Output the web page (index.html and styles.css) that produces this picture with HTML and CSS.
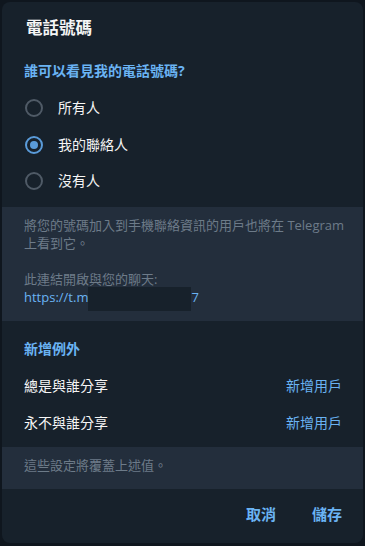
FILE: index.html
```html
<!DOCTYPE html>
<html lang="zh-Hant">
<head>
<meta charset="utf-8">
<link rel="stylesheet" href="styles.css">
</head>
<body>
<div class="dialog">
  <div class="header"><span class="title">電話號碼</span></div>
  <div class="section-title first">誰可以看見我的電話號碼?</div>
  <div class="options">
    <div class="option"><span class="radio"></span><span>所有人</span></div>
    <div class="option"><span class="radio checked"></span><span>我的聯絡人</span></div>
    <div class="option"><span class="radio"></span><span>沒有人</span></div>
  </div>
  <div class="note info">
    <p>將您的號碼加入到手機聯絡資訊的用戶也將在 Telegram 上看到它。</p>
    <p class="para2">此連結開啟與您的聊天:</p>
    <p class="link-line"><span class="link">https://t.m</span><span class="redact"></span><span class="link">7</span></p>
  </div>
  <div class="section-title second">新增例外</div>
  <div class="rows">
    <div class="row"><span>總是與誰分享</span><span class="link">新增用戶</span></div>
    <div class="row"><span>永不與誰分享</span><span class="link">新增用戶</span></div>
  </div>
  <div class="note footer-note"><p>這些設定將覆蓋上述值。</p></div>
  <div class="buttons">
    <span class="btn">取消</span>
    <span class="btn">儲存</span>
  </div>
</div>
</body>
</html>
```

FILE: styles.css
```css
html, body {
  margin: 0;
  padding: 0;
  background: #0f161e;
}
body {
  font-family: "Open Sans", "Noto Sans CJK TC", sans-serif;
  font-size: 13px;
  color: #f5f5f5;
  width: 365px;
  height: 546px;
  overflow: hidden;
}
.dialog {
  margin: 2px 2px 0 2px;
  width: 361px;
  height: 541px;
  background: #17212b;
  border-radius: 8px;
  display: flex;
  flex-direction: column;
  overflow: hidden;
}
.header {
  height: 46px;
  box-sizing: border-box;
  padding: 16px 24px 0 24px;
}
.title {
  display: block;
  font-size: 16.5px;
  font-weight: 700;
  line-height: 20px;
  color: #f5f5f5;
}
.section-title {
  padding: 0 22px;
  font-size: 14px;
  font-weight: 700;
  line-height: 20px;
  color: #6ab3f3;
}
.section-title.first {
  padding-top: 13px;
}
.section-title.second {
  padding-top: 18px;
}
.options {
  margin-top: 9px;
  display: flex;
  flex-direction: column;
}
.option {
  height: 36.5px;
  display: flex;
  align-items: center;
  padding-left: 23px;
  gap: 15px;
  font-size: 14px;
  line-height: 18px;
}
.radio {
  width: 18px;
  height: 18px;
  box-sizing: border-box;
  border: 2px solid #4f5a66;
  border-radius: 50%;
  display: flex;
  align-items: center;
  justify-content: center;
}
.radio.checked {
  border-color: #5a9bd9;
}
.radio.checked::after {
  content: "";
  width: 8px;
  height: 8px;
  border-radius: 50%;
  background: #5a9bd9;
}
.note {
  background: #232e3c;
  color: #6d7b89;
  padding: 0 14px 0 22px;
}
.note p {
  margin: 0;
  line-height: 18px;
}
.info {
  margin-top: 7.5px;
  padding-top: 9px;
  padding-bottom: 15px;
}
.para2 {
  margin-top: 18px !important;
}
.link-line {
  display: flex;
  align-items: center;
}
.link {
  color: #6ab3f3;
}
.redact {
  display: inline-block;
  width: 103px;
  height: 24px;
  background: #17212b;
  margin-top: -1px;
  margin-bottom: -5px;
}
.rows {
  margin-top: 8px;
  display: flex;
  flex-direction: column;
}
.row {
  height: 37.5px;
  display: flex;
  align-items: center;
  justify-content: space-between;
  padding: 0 21px 0 22px;
  font-size: 14px;
  line-height: 18px;
}
.footer-note {
  margin-top: 5px;
  height: 42px;
  box-sizing: border-box;
  padding-top: 9px;
}
.buttons {
  display: flex;
  justify-content: flex-end;
  gap: 36px;
  padding: 15px 21px 0 0;
}
.btn {
  font-size: 15px;
  font-weight: 700;
  line-height: 20px;
  color: #6ab3f3;
}
```
